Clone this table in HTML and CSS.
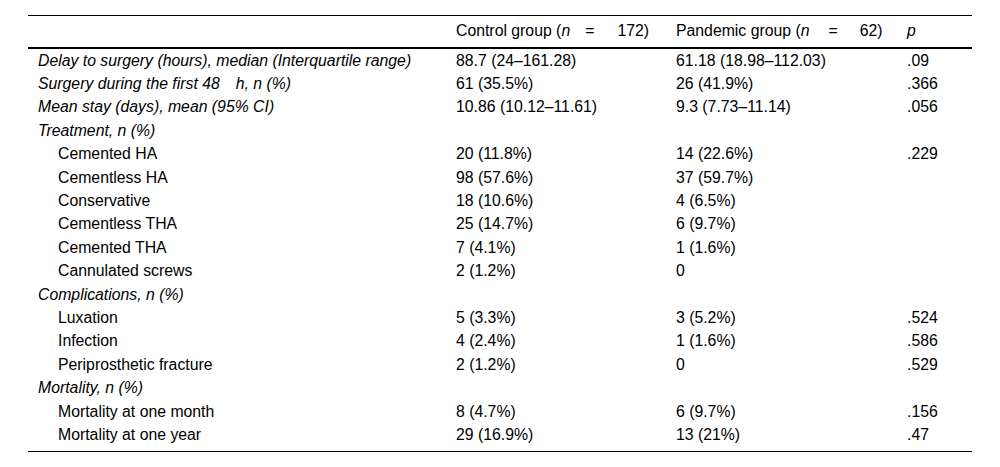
FILE: index.html
```html
<!DOCTYPE html>
<html>
<head>
<meta charset="utf-8">
<link rel="stylesheet" href="styles.css">
</head>
<body>
<table class="data">
  <colgroup>
    <col class="c1"><col class="c2"><col class="c3"><col class="c4">
  </colgroup>
  <thead>
    <tr>
      <th></th>
      <th>Control group (<i>n</i><span class="eq">=</span>172)</th>
      <th>Pandemic group (<i>n</i><span class="eq eq-wide">=</span>62)</th>
      <th><i>p</i></th>
    </tr>
  </thead>
  <tbody>
    <tr><td class="lab">Delay to surgery (hours), median (Interquartile range)</td><td>88.7 (24–161.28)</td><td>61.18 (18.98–112.03)</td><td>.09</td></tr>
    <tr><td class="lab">Surgery during the first 48<span class="gap"></span>h, n (%)</td><td>61 (35.5%)</td><td>26 (41.9%)</td><td>.366</td></tr>
    <tr><td class="lab">Mean stay (days), mean (95% CI)</td><td>10.86 (10.12–11.61)</td><td>9.3 (7.73–11.14)</td><td>.056</td></tr>
    <tr><td class="lab">Treatment, n (%)</td><td></td><td></td><td></td></tr>
    <tr><td class="sub">Cemented HA</td><td>20 (11.8%)</td><td>14 (22.6%)</td><td>.229</td></tr>
    <tr><td class="sub">Cementless HA</td><td>98 (57.6%)</td><td>37 (59.7%)</td><td></td></tr>
    <tr><td class="sub">Conservative</td><td>18 (10.6%)</td><td>4 (6.5%)</td><td></td></tr>
    <tr><td class="sub">Cementless THA</td><td>25 (14.7%)</td><td>6 (9.7%)</td><td></td></tr>
    <tr><td class="sub">Cemented THA</td><td>7 (4.1%)</td><td>1 (1.6%)</td><td></td></tr>
    <tr><td class="sub">Cannulated screws</td><td>2 (1.2%)</td><td>0</td><td></td></tr>
    <tr><td class="lab">Complications, n (%)</td><td></td><td></td><td></td></tr>
    <tr><td class="sub">Luxation</td><td>5 (3.3%)</td><td>3 (5.2%)</td><td>.524</td></tr>
    <tr><td class="sub">Infection</td><td>4 (2.4%)</td><td>1 (1.6%)</td><td>.586</td></tr>
    <tr><td class="sub">Periprosthetic fracture</td><td>2 (1.2%)</td><td>0</td><td>.529</td></tr>
    <tr><td class="lab">Mortality, n (%)</td><td></td><td></td><td></td></tr>
    <tr><td class="sub">Mortality at one month</td><td>8 (4.7%)</td><td>6 (9.7%)</td><td>.156</td></tr>
    <tr class="last"><td class="sub">Mortality at one year</td><td>29 (16.9%)</td><td>13 (21%)</td><td>.47</td></tr>
  </tbody>
</table>
</body>
</html>
```

FILE: styles.css
```css
html, body {
  margin: 0;
  padding: 0;
  background: #fff;
}
body {
  padding: 15px 28px 0 28px;
  font-family: "Liberation Sans", Arial, sans-serif;
  font-size: 15.8px;
  color: #000;
}
.data {
  width: 944px;
  border-collapse: collapse;
  table-layout: fixed;
  border-top: 1px solid #000;
  border-bottom: 1px solid #000;
}
.c1 { width: 418px; }
.c2 { width: 220px; }
.c3 { width: 231px; }
.c4 { width: 75px; }
.data th {
  font-weight: normal;
  text-align: left;
  padding: 7px 10px 8px 10px;
  line-height: 16px;
  height: 16px;
  border-bottom: 2px solid #000;
  white-space: nowrap;
}
.data td {
  padding: 0 10px;
  height: 23.4px;
  line-height: 16px;
  vertical-align: middle;
  white-space: nowrap;
}
.data .last td {
  padding-bottom: 4px;
}
.lab {
  font-style: italic;
}
.data td.sub {
  padding-left: 30px;
}
.eq {
  margin: 0 23px 0 15px;
}
.eq-wide {
  margin: 0 22px 0 19px;
}
.gap {
  display: inline-block;
  width: 16px;
}
```
